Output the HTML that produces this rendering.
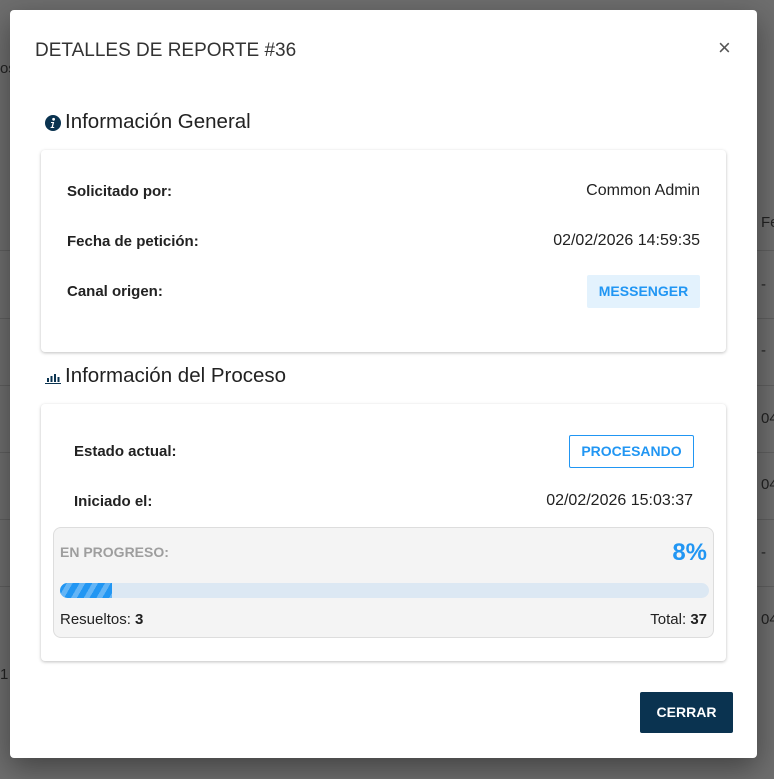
<!DOCTYPE html>
<html><head><meta charset="utf-8"><style>
*{box-sizing:border-box;margin:0;padding:0}
body{width:774px;height:779px;background:#6e6e6e;font-family:"Liberation Sans",Arial,sans-serif;position:relative;overflow:hidden;color:#212121}
.bgl{position:absolute;left:0;right:0;height:1px;background:#5f5f5f}
.bgt{position:absolute;color:#222;font-size:15px}
.dlg{position:absolute;left:10px;top:10px;width:747px;height:748px;background:#fff;border-radius:4px;box-shadow:0 10px 30px rgba(0,0,0,.4)}
.abs{position:absolute}
.card{position:absolute;left:31px;width:685px;background:#fff;border-radius:4px;box-shadow:0 1px 3px rgba(0,0,0,.25)}
.lbl{position:absolute;font-weight:bold;font-size:15px;color:#222}
.val{position:absolute;font-size:16px;color:#222;text-align:right}
h2{position:absolute;font-weight:normal;font-size:20.5px;color:#222}
</style></head><body>
<div class="bgt" style="left:0;top:60px">os</div>
<div class="bgl" style="top:250px"></div><div class="bgl" style="top:318px"></div><div class="bgl" style="top:385px"></div><div class="bgl" style="top:452px"></div><div class="bgl" style="top:519px"></div><div class="bgl" style="top:586px"></div>
<div class="bgt" style="left:761px;top:214px">Fe</div>
<div class="bgt" style="left:761px;top:276px">-</div>
<div class="bgt" style="left:761px;top:342px">-</div>
<div class="bgt" style="left:761px;top:410px">04</div>
<div class="bgt" style="left:761px;top:476px">04</div>
<div class="bgt" style="left:761px;top:544px">-</div>
<div class="bgt" style="left:761px;top:611px">04</div>
<div class="bgt" style="left:0;top:666px">1</div>
<div class="dlg">
 <div class="abs" style="left:25px;top:30px;font-size:19px;color:#333">DETALLES DE REPORTE #36</div>
 <div class="abs" style="left:708px;top:25px;font-size:22px;color:#555">×</div>
 <svg class="abs" style="left:35px;top:105px" width="16" height="16" viewBox="0 0 16 16"><circle cx="8" cy="8" r="8" fill="#0a3350"/><circle cx="8.6" cy="4.3" r="1.4" fill="#fff"/><path d="M6 7h3.2l-1.3 5h1.3v1H5.6v-1h1l1-4H6z" fill="#fff"/></svg>
 <h2 style="left:55px;top:100px">Información General</h2>
 <div class="card" style="top:140px;height:202px">
  <div class="lbl" style="left:26px;top:33px">Solicitado por:</div>
  <div class="val" style="right:26px;top:32px">Common Admin</div>
  <div class="lbl" style="left:26px;top:83px">Fecha de petición:</div>
  <div class="val" style="right:26px;top:82px">02/02/2026 14:59:35</div>
  <div class="lbl" style="left:26px;top:133px">Canal origen:</div>
  <div class="abs" style="left:546px;top:125px;width:113px;height:33px;background:#e3f2fd;color:#2196f3;font-weight:bold;font-size:14px;line-height:33px;text-align:center;border-radius:2px">MESSENGER</div>
 </div>
 <svg class="abs" style="left:35px;top:362px" width="16" height="12" viewBox="0 0 16 12"><rect x="2" y="6" width="2" height="4" fill="#0a3350"/><rect x="5.5" y="4" width="2" height="6" fill="#0a3350"/><rect x="9" y="2" width="2" height="8" fill="#0a3350"/><rect x="12.5" y="5" width="2" height="5" fill="#0a3350"/><rect x="0" y="11" width="16" height="1" fill="#0a3350"/></svg>
 <h2 style="left:55px;top:354px">Información del Proceso</h2>
 <div class="card" style="top:394px;height:257px">
  <div class="lbl" style="left:33px;top:39px">Estado actual:</div>
  <div class="abs" style="left:528px;top:31px;width:125px;height:33px;border:1px solid #2196f3;color:#2196f3;font-weight:bold;font-size:14px;line-height:31px;text-align:center;border-radius:2px">PROCESANDO</div>
  <div class="lbl" style="left:33px;top:89px">Iniciado el:</div>
  <div class="val" style="right:33px;top:88px">02/02/2026 15:03:37</div>
  <div class="abs" style="left:12px;top:123px;width:661px;height:111px;background:#f4f4f4;border:1px solid #ddd;border-radius:8px">
   <div class="abs" style="left:6px;top:16px;font-weight:bold;font-size:14px;color:#9e9e9e">EN PROGRESO:</div>
   <div class="abs" style="right:6px;top:11px;font-weight:bold;font-size:24px;color:#2196f3">8%</div>
   <div class="abs" style="left:6px;top:55px;width:649px;height:15px;background:#dce8f3;border-radius:8px;overflow:hidden">
    <div style="width:52px;height:15px;background:repeating-linear-gradient(120deg,#2196f3 0 6px,#64b5f6 6px 11px)"></div>
   </div>
   <div class="abs" style="left:6px;top:83px;font-size:15px">Resueltos: <b>3</b></div>
   <div class="abs" style="right:6px;top:83px;font-size:15px">Total: <b>37</b></div>
  </div>
 </div>
 <div class="abs" style="left:630px;top:682px;width:93px;height:41px;background:#0a3350;color:#fff;font-weight:bold;font-size:14px;line-height:41px;text-align:center;border-radius:2px">CERRAR</div>
</div>
</body></html>
